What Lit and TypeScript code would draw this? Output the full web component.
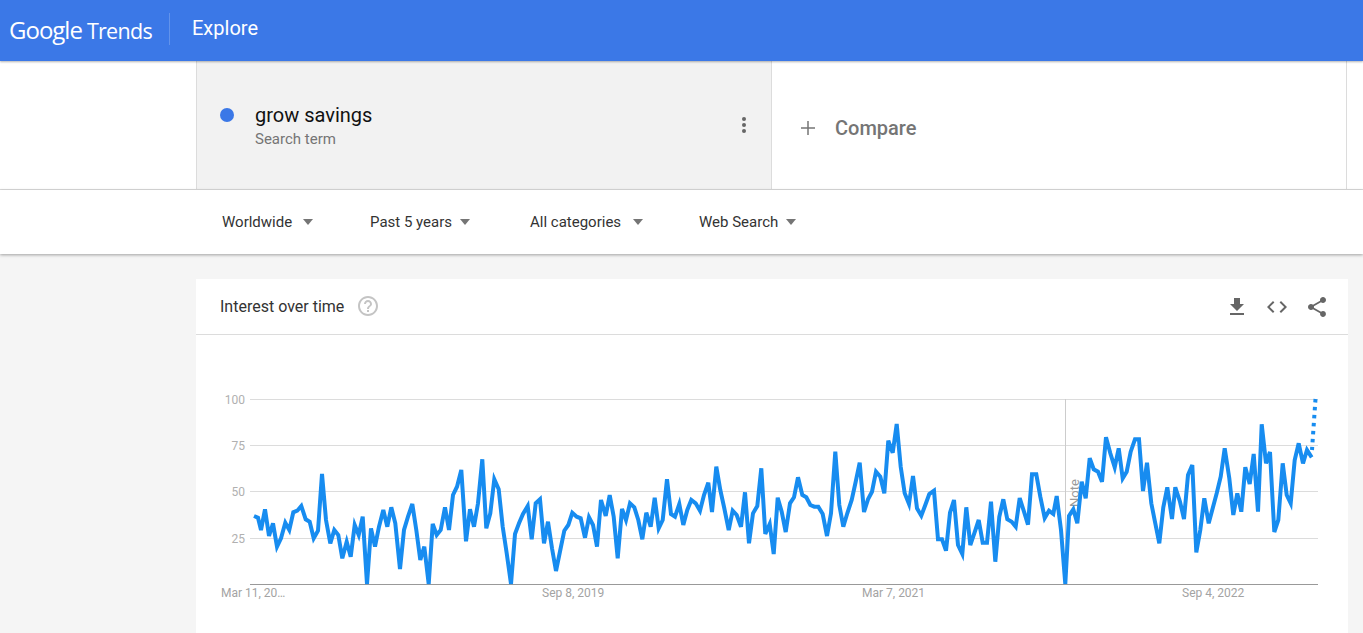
import { LitElement, html, svg, css } from 'lit';
import { customElement } from 'lit/decorators.js';

// Series traced from the reference, in 3x crop coordinates: [crop left, x, y, x, y, ...]
const TRACE: [number, number[]][] = [
  [200, [162,408,174,413,183,450,195,388,207,468,219,430,231,500,243,475,256,428,268,450,280,397,292,392,304,378,317,418,329,425,341,475,354,452,366,282,378,420,391,490,403,450,415,465,427,535,440,485,452,530,464,435,476,465,488,410,501,612,513,445,525,500,537,440,550,390,562,440,574,382,586,430,600,567,612,450,624,410,637,372,649,450,661,540,673,500,686,612,698,432,710,465,722,450,735,382,747,450,759,345,771,320,784,270,798,484,810,388,822,440,834,370]],
  [480, [7,238,19,445,31,400,43,298,56,328,68,440,80,520,93,612,105,462,117,430,129,402,143,378,155,478,167,370,180,358,192,490,204,425,216,505,228,573,241,510,253,452,265,435,277,398,290,410,302,415,315,473,327,412,339,435,351,500,363,360,377,408,389,345,401,410,413,535,426,387,438,420,450,370,463,382,475,420,487,478,499,398,512,440,524,353,536,445,548,420,561,298,573,402,585,410,598,372,610,435,622,390,634,360,647,370,660,392,672,345,685,308,696,396,709,260,721,330,733,385,746,450,758,392,770,405,783,440,795,337,807,490,819,400,832,378]],
  [760, [4,265,16,462,29,432,41,522,53,353,65,395,77,456,90,370,102,352,114,292,127,345,139,352,151,375,163,380,175,380,188,402,201,468,213,400,226,215,238,375,250,440,262,400,275,360,287,305,299,248,312,396,324,358,336,335,348,275,361,290,373,340,385,182,398,218,410,132,422,260,434,340,447,372,459,288,471,385,484,407,496,375,508,342,522,332,534,478,546,478,558,512,570,398,582,360,594,495,607,522,619,382,631,495,643,460,656,420,668,488,681,488,693,365,706,545,718,410,730,358,742,418,755,425,767,440,779,354,792,395,804,434,816,283,829,283,841,350]],
  [1040, [14,414,27,392,40,402,50,348,63,450,76,612,87,408,100,388,112,430,125,305,137,355,149,235,161,268,174,275,186,305,198,172,211,220,224,262,236,205,248,295,260,275,272,215,285,178,297,178,309,333,321,248,334,370,346,430,358,490,370,382,382,322,396,417,406,322,420,365,432,417,444,285,457,255,469,517,481,450,493,355,506,430,518,385,530,340,542,290,554,205,568,295,580,405,592,340,604,395,616,262,629,312,641,222,654,395,665,133,678,250,690,216,703,456,715,420,728,250,740,345,752,370,764,240,776,190,789,250,801,210,815,232]],
];

const points = TRACE.flatMap(([left, flat]) => {
  const out: string[] = [];
  for (let i = 0; i < flat.length; i += 2) {
    out.push(`${(left + flat[i] / 3).toFixed(1)},${(380 + flat[i + 1] / 3).toFixed(1)}`);
  }
  return out;
}).join(' ');

const GRID = [
  { label: '100', y: 399.5 },
  { label: '75', y: 445.5 },
  { label: '50', y: 491.5 },
  { label: '25', y: 538.5 },
];

const X_LABELS = [
  { label: 'Mar 11, 20…', x: 221 },
  { label: 'Sep 8, 2019', x: 542 },
  { label: 'Mar 7, 2021', x: 862 },
  { label: 'Sep 4, 2022', x: 1182 },
];

const FILTERS = [
  { label: 'Worldwide', width: 148, gap: 11 },
  { label: 'Past 5 years', width: 160, gap: 8 },
  { label: 'All categories', width: 169, gap: 12 },
  { label: 'Web Search', width: 110, gap: 8 },
];

@customElement('trend-chart')
export class TrendChart extends LitElement {
  static styles = css`
    :host { display: block; height: 298px; }
    svg { display: block; }
    .grid { stroke: #dcdcdc; stroke-width: 1; }
    .base { stroke: #999; stroke-width: 1; }
    .note-line { stroke: #ccc; stroke-width: 1; }
    text { font-family: Roboto, sans-serif; font-size: 12px; fill: #a3a3a3; }
    .y-label { fill: #b0b0b0; }
    .note { font-size: 13px; fill: #9a9a9a; }
    .line { fill: none; stroke: #178cf0; stroke-width: 4; }
    .dotted { fill: none; stroke: #178cf0; stroke-width: 4; stroke-dasharray: 3.5 4.5; }
  `;

  render() {
    // viewBox keeps the page coordinates of the plot, the card starts at 196,335
    return html`
      <svg width="1152" height="298" viewBox="196 335 1152 298">
        <defs>
          <clipPath id="plot"><rect x="240" y="390" width="1080" height="194.5"></rect></clipPath>
        </defs>
        ${GRID.map(
          (g) => svg`
            <line class="grid" x1="250" x2="1318" y1=${g.y} y2=${g.y}></line>
            <text class="y-label" x="245" y=${g.y + 4} text-anchor="end">${g.label}</text>
          `
        )}
        <line class="note-line" x1="1065.5" x2="1065.5" y1="399" y2="584"></line>
        <text class="note" transform="translate(1079 507) rotate(-90)">Note</text>
        <line class="base" x1="250" x2="1318" y1="584.5" y2="584.5"></line>
        ${X_LABELS.map((l) => svg`<text x=${l.x} y="597">${l.label}</text>`)}
        <polyline class="line" clip-path="url(#plot)" points=${points}></polyline>
        <line class="dotted" x1="1315.5" y1="399" x2="1312" y2="450"></line>
      </svg>
    `;
  }
}

@customElement('app-root')
export class AppRoot extends LitElement {
  static styles = css`
    :host {
      display: block;
      height: 633px;
      overflow: hidden;
      background: #f5f5f5;
      font-family: Roboto, sans-serif;
    }
    .appbar {
      position: relative;
      z-index: 2;
      height: 61px;
      display: flex;
      align-items: center;
      background: #3b78e7;
      color: #fff;
      box-shadow: 0 1px 2px rgba(0, 0, 0, 0.3);
    }
    .logo {
      width: 169px;
      padding: 0 0 3px 9px;
      box-sizing: border-box;
      font-family: 'Open Sans', sans-serif;
      font-size: 24px;
      letter-spacing: -1px;
      white-space: nowrap;
    }
    .logo span { margin-left: 5px; font-size: 21.5px; letter-spacing: -0.7px; }
    .divider { width: 1px; height: 32px; background: rgba(255, 255, 255, 0.2); margin-top: -3px; }
    .page-title { margin-left: 22px; font-size: 20px; margin-top: -6px; }

    .terms {
      height: 128px;
      background: #fff;
      border-bottom: 1px solid #dcdcdc;
      padding-left: 196px;
      display: flex;
    }
    .term {
      width: 574px;
      box-sizing: content-box;
      background: #f2f2f2;
      border-left: 1px solid #dcdcdc;
      border-right: 1px solid #dcdcdc;
      display: flex;
      padding-top: 42px;
      height: 86px;
    }
    .dot {
      width: 14px;
      height: 14px;
      border-radius: 50%;
      background: #3b78e7;
      margin: 5px 21px 0 23px;
      flex: none;
    }
    .term-name { font-size: 20px; line-height: 24px; color: #111; }
    .term-kind { font-size: 15px; line-height: 20px; margin-top: 2px; color: #757575; }
    .more {
      margin-left: auto;
      margin-right: 24px;
      margin-top: 13px;
      align-self: flex-start;
      fill: #666;
    }
    .compare {
      width: 575px;
      border-right: 1px solid #dcdcdc;
      display: flex;
      align-items: center;
      color: #757575;
      font-size: 20px;
      font-weight: 500;
      padding: 6px 0 0 28px;
      box-sizing: border-box;
    }
    .compare svg { stroke: #757575; stroke-width: 1.5; margin-right: 19px; }

    .filters {
      position: relative;
      z-index: 1;
      height: 64px;
      display: flex;
      align-items: center;
      padding-left: 222px;
      background: #fff;
      box-shadow: 0 1px 3px rgba(0, 0, 0, 0.35);
      font-size: 15px;
      color: #333;
    }
    .filter { display: flex; align-items: center; flex: none; }
    .caret {
      width: 0;
      height: 0;
      border-left: 5.5px solid transparent;
      border-right: 5.5px solid transparent;
      border-top: 6px solid #757575;
    }

    .card {
      margin: 25px 0 0 196px;
      width: 1152px;
      background: #fff;
    }
    .card-head {
      height: 55px;
      border-bottom: 1px solid #dcdcdc;
      display: flex;
      align-items: center;
      padding: 0 19px 0 24px;
      font-size: 16px;
      color: #333;
    }
    .help { margin: -2px 0 0 12px; fill: #c4c4c4; }
    .actions { margin-left: auto; display: flex; gap: 16px; fill: #666; }
  `;

  render() {
    return html`
      <header class="appbar">
        <div class="logo">Google<span>Trends</span></div>
        <div class="divider"></div>
        <div class="page-title">Explore</div>
      </header>

      <section class="terms">
        <div class="term">
          <div class="dot"></div>
          <div>
            <div class="term-name">grow savings</div>
            <div class="term-kind">Search term</div>
          </div>
          <svg class="more" width="6" height="18" viewBox="0 0 6 18">
            <circle cx="3" cy="3" r="2"></circle>
            <circle cx="3" cy="9" r="2"></circle>
            <circle cx="3" cy="15" r="2"></circle>
          </svg>
        </div>
        <div class="compare">
          <svg width="16" height="16" viewBox="0 0 16 16"><path d="M8 1v14M1 8h14"></path></svg>
          Compare
        </div>
      </section>

      <nav class="filters">
        ${FILTERS.map(
          (f) => html`
            <div class="filter" style="width:${f.width}px">
              <span>${f.label}</span>
              <span class="caret" style="margin-left:${f.gap}px"></span>
            </div>
          `
        )}
      </nav>

      <section class="card">
        <div class="card-head">
          <span>Interest over time</span>
          <svg class="help" width="24" height="24" viewBox="0 0 24 24">
            <path d="M11 18h2v-2h-2v2zm1-16C6.48 2 2 6.48 2 12s4.48 10 10 10 10-4.48 10-10S17.52 2 12 2zm0 18c-4.41 0-8-3.59-8-8s3.59-8 8-8 8 3.59 8 8-3.59 8-8 8zm0-14c-2.21 0-4 1.79-4 4h2c0-1.1.9-2 2-2s2 .9 2 2c0 2-3 1.75-3 5h2c0-2.25 3-2.5 3-5 0-2.21-1.79-4-4-4z"></path>
          </svg>
          <div class="actions">
            <svg width="24" height="24" viewBox="0 0 24 24"><path d="M19 9h-4V3H9v6H5l7 7 7-7zM5 18v2h14v-2H5z"></path></svg>
            <svg width="24" height="24" viewBox="0 0 24 24"><path d="M9.4 16.6L4.8 12l4.6-4.6L8 6l-6 6 6 6 1.4-1.4zm5.2 0l4.6-4.6-4.6-4.6L16 6l6 6-6 6-1.4-1.4z"></path></svg>
            <svg width="24" height="24" viewBox="0 0 24 24"><path d="M18 16.08c-.76 0-1.44.3-1.96.77L8.91 12.7c.05-.23.09-.46.09-.7s-.04-.47-.09-.7l7.05-4.11c.54.5 1.25.81 2.04.81 1.66 0 3-1.34 3-3s-1.34-3-3-3-3 1.34-3 3c0 .24.04.47.09.7L8.04 9.81C7.5 9.31 6.79 9 6 9c-1.66 0-3 1.34-3 3s1.34 3 3 3c.79 0 1.5-.31 2.04-.81l7.12 4.16c-.05.21-.08.43-.08.65 0 1.61 1.31 2.92 2.92 2.92s2.92-1.31 2.92-2.92-1.31-2.92-2.92-2.92z"></path></svg>
          </div>
        </div>
        <trend-chart></trend-chart>
      </section>
    `;
  }
}
